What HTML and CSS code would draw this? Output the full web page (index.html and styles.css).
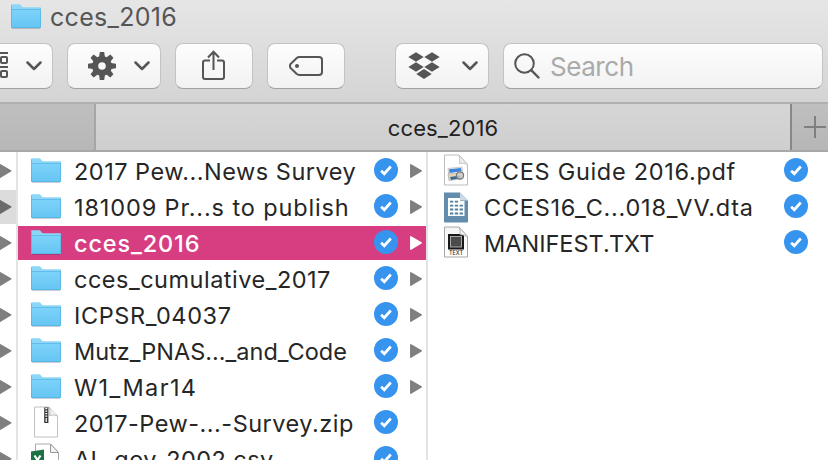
FILE: index.html
```html
<!DOCTYPE html>
<html lang="en">
<head>
<meta charset="utf-8">
<title>cces_2016</title>
<link rel="stylesheet" href="styles.css">
</head>
<body>
<svg class="defs" width="0" height="0" aria-hidden="true">
  <defs>
    <linearGradient id="fold" x1="0" y1="0" x2="0" y2="1"><stop offset="0" stop-color="#7dd3fa"/><stop offset="1" stop-color="#65c5f3"/></linearGradient>
    <linearGradient id="page" x1="0" y1="0" x2="0" y2="1"><stop offset="0" stop-color="#f4f4f4"/><stop offset="1" stop-color="#fff"/></linearGradient>
    <symbol id="folder" viewBox="0 0 30 25">
      <path d="M1 24.6h28" stroke="#000" stroke-opacity=".2"/>
      <path d="M0 1.5Q0 .3 1.2 .3H8.200q.8 0 1.400 .7l1.200 1.600q.5.700 1.300.7H29q1 0 1 1V23q0 1-1 1H1q-1 0-1-1z" fill="#8cd6f8"/>
      <path d="M0 6.200Q0 5.200 1 5.200H29q1 0 1 1V23q0 1-1 1H1q-1 0-1-1z" fill="url(#fold)"/>
      <path d="M.5 5.500h29" stroke="#5db5df" stroke-width=".8"/>
      <path d="M.4 1.500V23q0 .6.600.6H29q.6 0 .6-.6V4.500" fill="none" stroke="#54b2df" stroke-width=".8"/>
    </symbol>
    <symbol id="check" viewBox="0 0 24 24"><circle cx="12" cy="12" r="12" fill="#3694ef"/><path d="M7.100 12.700l3.200 3 6.500-7.200" fill="none" stroke="#fff" stroke-width="2.700"/></symbol>
    <symbol id="tri" viewBox="0 0 12 14"><path d="M.8.800L11.200 6.800 .8 13.200z" fill="currentColor" stroke="currentColor" stroke-width="1.500" stroke-linejoin="round"/></symbol>
    <symbol id="chevron" viewBox="0 0 16 10"><path d="M1.500 1.500L8 8l6.500-6.500" fill="none" stroke="#555" stroke-width="2.500" stroke-linecap="round" stroke-linejoin="round"/></symbol>
  </defs>
</svg>
<div class="window">
  <header class="top">
    <div class="title"><svg class="folder"><use href="#folder"/></svg><span>cces_2016</span></div>
    <div class="tools">
      <div class="btn arrange">
        <svg width="9" height="28" viewBox="0 0 9 28" fill="none" stroke="#555" stroke-width="2"><path d="M0 1h8M0 15h8"/><rect x="1" y="5" width="6" height="6" rx="1"/><rect x="1" y="19" width="6" height="6" rx="1"/></svg>
        <svg class="chev"><use href="#chevron"/></svg>
      </div>
      <div class="btn action">
        <svg width="28" height="28" viewBox="-14 -14 28 28" fill="#555">
          <path fill-rule="evenodd" d="M-10 0a10 10 0 1 0 20 0a10 10 0 1 0-20 0M-3.800 0a3.800 3.800 0 1 0 7.600 0a3.800 3.800 0 1 0-7.600 0"/>
          <g id="teeth"><path id="tooth" d="M-2.900-9L-2.200-14H2.200L2.900-9z"/><use href="#tooth" transform="rotate(45)"/><use href="#tooth" transform="rotate(90)"/><use href="#tooth" transform="rotate(135)"/></g>
          <use href="#teeth" transform="rotate(180)"/>
        </svg>
        <svg class="chev"><use href="#chevron"/></svg>
      </div>
      <div class="btn share"><svg width="24" height="31" viewBox="0 0 24 31" fill="none" stroke="#555" stroke-width="2"><path d="M8 10.500H3q-2 0-2 2V27q0 2 2 2H20q2 0 2-2V12.500q0-2-2-2H15M11.500 20V1.800M6 7.500l5.500-5.700L17 7.500"/></svg></div>
      <div class="btn tag"><svg width="34" height="20" viewBox="0 0 34 20"><path d="M10.500 1H30q3 0 3 3V16q0 3-3 3H10.500q-1.700 0-3-1.200L1.500 12q-1-2 0-4L7.500 2.200Q8.800 1 10.500 1z" fill="none" stroke="#555" stroke-width="2"/><circle cx="8" cy="10" r="2" fill="#555"/></svg></div>
      <div class="btn dropbox">
        <svg width="32" height="28" viewBox="0 0 32 28" fill="#555"><path d="M8 .3L15.700 5 8 9.800 .3 5zM24 .3L31.700 5 24 9.800 16.300 5zM8 10.200L15.700 15 8 19.800 .3 15zM24 10.200L31.700 15 24 19.800 16.300 15zM16 17L23.700 22 16 27 8.300 22z"/></svg>
        <svg class="chev"><use href="#chevron"/></svg>
      </div>
      <div class="btn search">
        <svg width="26" height="26" viewBox="0 0 26 26" fill="none" stroke="#555" stroke-width="2"><circle cx="10.500" cy="10.500" r="9.300"/><path d="M17.200 17.200L24.500 24.500" stroke-width="2.400" stroke-linecap="round"/></svg>
        <span>Search</span>
      </div>
    </div>
  </header>
  <nav class="tabs">
    <div class="tab idle"></div>
    <div class="tab active">cces_2016</div>
    <div class="tab add"><svg width="22" height="22" viewBox="0 0 22 22" stroke="#7f7f7f" stroke-width="2"><path d="M11 0V22M0 11H22"/></svg></div>
  </nav>
  <main class="columns">
    <div class="col parents">
      <div class="row"><svg class="tri"><use href="#tri"/></svg></div>
      <div class="row current"><svg class="tri"><use href="#tri"/></svg></div>
      <div class="row"><svg class="tri"><use href="#tri"/></svg></div>
      <div class="row"><svg class="tri"><use href="#tri"/></svg></div>
      <div class="row"><svg class="tri"><use href="#tri"/></svg></div>
      <div class="row"><svg class="tri"><use href="#tri"/></svg></div>
      <div class="row"><svg class="tri"><use href="#tri"/></svg></div>
      <div class="row"><svg class="tri"><use href="#tri"/></svg></div>
      <div class="row"><svg class="tri"><use href="#tri"/></svg></div>
    </div>
    <div class="col folders">
      <div class="row"><svg class="folder"><use href="#folder"/></svg><span class="name n1">2017 Pew...News Survey</span><svg class="check"><use href="#check"/></svg><svg class="tri"><use href="#tri"/></svg></div>
      <div class="row"><svg class="folder"><use href="#folder"/></svg><span class="name n2">181009 Pr...s to publish</span><svg class="check"><use href="#check"/></svg><svg class="tri"><use href="#tri"/></svg></div>
      <div class="row selected"><svg class="folder"><use href="#folder"/></svg><span class="name n3">cces_2016</span><svg class="check"><use href="#check"/></svg><svg class="tri"><use href="#tri"/></svg></div>
      <div class="row"><svg class="folder"><use href="#folder"/></svg><span class="name n4">cces_cumulative_2017</span><svg class="check"><use href="#check"/></svg><svg class="tri"><use href="#tri"/></svg></div>
      <div class="row"><svg class="folder"><use href="#folder"/></svg><span class="name n5">ICPSR_04037</span><svg class="check"><use href="#check"/></svg><svg class="tri"><use href="#tri"/></svg></div>
      <div class="row"><svg class="folder"><use href="#folder"/></svg><span class="name n6">Mutz_PNAS..._and_Code</span><svg class="check"><use href="#check"/></svg><svg class="tri"><use href="#tri"/></svg></div>
      <div class="row"><svg class="folder"><use href="#folder"/></svg><span class="name n7">W1_Mar14</span><svg class="check"><use href="#check"/></svg><svg class="tri"><use href="#tri"/></svg></div>
      <div class="row">
        <svg class="doc" viewBox="0 0 30 32"><path d="M3.500 1H18l8.500 9V31h-23z" fill="#fff" stroke="#c2c2c2"/><path d="M18 1q2 4 .5 8.500Q23 8 26.500 10" fill="#f1f1f1" stroke="#bbb"/><path d="M15.300 1.500V17" stroke="#333" stroke-width="4.200"/><path d="M15.300 2V12" stroke="#fff" stroke-width="2" stroke-dasharray="1.300 1.200"/><path d="M15.300 12v4" stroke="#ddd" stroke-width="1.500"/></svg>
        <span class="name n8">2017-Pew-...-Survey.zip</span><svg class="check"><use href="#check"/></svg><i class="tri"></i></div>
      <div class="row">
        <svg class="doc" viewBox="0 0 30 32"><path d="M4.500 2H19.500l8 8.500V31h-23z" fill="#fff" stroke="#aaa"/><path d="M19.500 2v8.500h8z" fill="#f4f4f4" stroke="#999"/><path d="M0 9.500L13 7.500V30L0 28z" fill="#1c7245"/><path d="M3.500 13.500l6 9M9.500 13.500l-6 9" stroke="#fff" stroke-width="2.200"/></svg>
        <span class="name n9">AL-gov-2002.csv</span><svg class="check"><use href="#check"/></svg><i class="tri"></i></div>
    </div>
    <div class="col files">
      <div class="row">
        <svg class="file" viewBox="0 0 24 32"><path d="M.5 1H15l8.500 9.500V31H.5z" fill="#fff" stroke="#bdbdbd"/><path d="M15 1q1.500 4 .5 8.500Q20 8.500 23.500 10.500z" fill="#ededed" stroke="#c5c5c5"/><path d="M4 14.500l14-1.500 1 8-14 2z" fill="#f1f6fb" stroke="#b5b5b5" stroke-width=".7"/><path d="M5 15.300l12-1.300.5 3.200-12 1.800z" fill="#3f82d8"/><path d="M4 20l15-1.500v6L5 26.500z" fill="#e3d5b5" stroke="#aaa" stroke-width=".7"/><path d="M6 23l10-1.500 1 2.500-10 2z" fill="#3f6a96"/><circle cx="16" cy="21.500" r="3.600" fill="#ccc" fill-opacity=".8" stroke="#777" stroke-width="1.200"/></svg>
        <span class="name f1">CCES Guide 2016.pdf</span><svg class="check"><use href="#check"/></svg></div>
      <div class="row">
        <svg class="file" viewBox="0 0 24 32"><path d="M0 2.500H16L24 10.500V31.500q0 1-1 1H1q-1 0-1-1z" fill="#638dac"/><path d="M16 2.500v8h8z" fill="#cbd9e4"/><path d="M4 8H16v3h4.500V26H4z" fill="#fff"/><path d="M6 11.700h9M6 15.700h13M6 19.500h13M6 23.500h13" stroke="#507e9f" stroke-width="1.800" stroke-dasharray="3.300 1.500"/></svg>
        <span class="name f2">CCES16_C...018_VV.dta</span><svg class="check"><use href="#check"/></svg></div>
      <div class="row">
        <svg class="file" viewBox="0 0 24 32"><path d="M.5 1H15l8.500 9.500V31H.5z" fill="url(#page)" stroke="#a8a8a8"/><rect x="4" y="8" width="16" height="15.500" fill="#181818"/><rect x="6.500" y="10.500" width="11" height="10.500" fill="#4b4b4b" stroke="#b5b5b5" stroke-width=".9"/><path d="M15 1q1.500 3.500 1 7.500 4 .5 7.500 2z" fill="#eee" stroke="#aaa" stroke-width=".8"/><text x="12" y="28.800" text-anchor="middle" class="stamp">TEXT</text></svg>
        <span class="name f3">MANIFEST.TXT</span><svg class="check"><use href="#check"/></svg></div>
    </div>
  </main>
</div>
</body>
</html>
```

FILE: styles.css
```css
* { box-sizing: border-box; }
body { margin: 0; font-family: Inter, "Liberation Sans", sans-serif; color: #262626; }
svg { display: block; flex: none; }
.defs { position: absolute; }
.window { width: 828px; height: 460px; overflow: hidden; display: flex; flex-direction: column; background: #fff; }

.top { height: 104px; flex: none; background: linear-gradient(#e6e6e6, #d4d4d4); border-bottom: 2px solid #b0b0b0; }
.title { display: flex; align-items: center; height: 34px; padding-left: 11px; gap: 9px; font-size: 25px; color: #555; letter-spacing: .3px; }
.title .folder { margin-top: -1px; }
.folder { width: 30px; height: 25px; }
.tools { display: flex; margin-top: 9px; }
.btn { height: 46px; display: flex; align-items: center; flex: none; border: 1px solid #c3c3c3; border-bottom-color: #a2a2a2; border-radius: 8px; background: linear-gradient(#fdfdfd, #f2f2f2); }
.chev { width: 16px; height: 10px; }
.arrange { width: 53px; border-left: 0; border-radius: 0 8px 8px 0; justify-content: space-between; padding-right: 10px; margin-right: 14px; }
.action { width: 94px; justify-content: space-between; padding: 0 10px 0 20px; margin-right: 14px; }
.share { width: 78px; justify-content: center; padding-bottom: 1px; margin-right: 14px; }
.tag { width: 78px; justify-content: center; padding-right: 0; margin-right: 50px; }
.dropbox { width: 94px; justify-content: space-between; padding: 0 10px 0 12px; margin-right: 14px; }
.search { width: 320px; gap: 10px; padding-left: 10px; font-size: 26px; letter-spacing: -.45px; color: #aaa; }
.search span { padding-top: 1px; }

.tabs { height: 48px; flex: none; display: flex; border-bottom: 2px solid #a8a8a8; }
.idle { width: 96px; background: linear-gradient(#bfbfbf, #b7b7b7); border-right: 2px solid #a6a6a6; }
.active { width: 694px; display: flex; align-items: center; justify-content: center; padding-top: 1px; background: linear-gradient(#d6d6d6, #cecece); font-size: 22px; letter-spacing: .1px; color: #222; }
.add { width: 38px; flex: none; display: flex; align-items: center; padding-left: 12px; border-left: 2px solid #888; background: linear-gradient(#bfbfbf, #b6b6b6); overflow: hidden; }

.columns { height: 308px; flex: none; display: flex; overflow: hidden; }
.col { display: flex; flex-direction: column; gap: 2px; padding-top: 2px; flex: none; height: 340px; }
.row { height: 34px; flex: none; display: flex; align-items: center; }
.parents { width: 18px; border-right: 2px solid #e3e3e3; }
.folders { width: 410px; border-right: 2px solid #e3e3e3; }
.files { width: 400px; }
.folders .row { padding: 0 4px 0 13px; }
.files .row { padding: 0 20px 0 16px; }
.tri { width: 12px; height: 14px; color: #7f7f7f; flex: none; margin-top: -1px; }
.parents .tri { margin-left: -1px; width: 13px; }
.current { background: #dcdcdc; }
.current .tri { color: #6b6b6b; }
.selected { background: #d73e82; color: #fff; font-weight: 500; }
.selected .tri { color: #fff; }
.row .folder { margin-top: -1px; }
.name { flex: 1; padding: 1px 0 0 13px; font-size: 23.500px; line-height: 34px; white-space: nowrap; }
.check { width: 24px; height: 24px; margin: -2px 12px 0 0; }
.files .check { margin-right: 0; }
.doc { width: 30px; height: 32px; margin-top: -2px; }
.file { width: 24px; height: 32px; margin-top: -2px; overflow: visible; }
.files .name { padding-left: 16px; }
.n1 { letter-spacing: .5px; }
.n2 { letter-spacing: .87px; }
.n3 { letter-spacing: .85px; }
.n4 { letter-spacing: .5px; }
.n5 { letter-spacing: .6px; }
.n7 { letter-spacing: 1.4px; }
.n8 { letter-spacing: .5px; }
.n9 { letter-spacing: .4px; }
.f1 { letter-spacing: .7px; }
.f2 { letter-spacing: .75px; }
.stamp { font: 500 5.500px Inter, sans-serif; fill: #333; }
```
